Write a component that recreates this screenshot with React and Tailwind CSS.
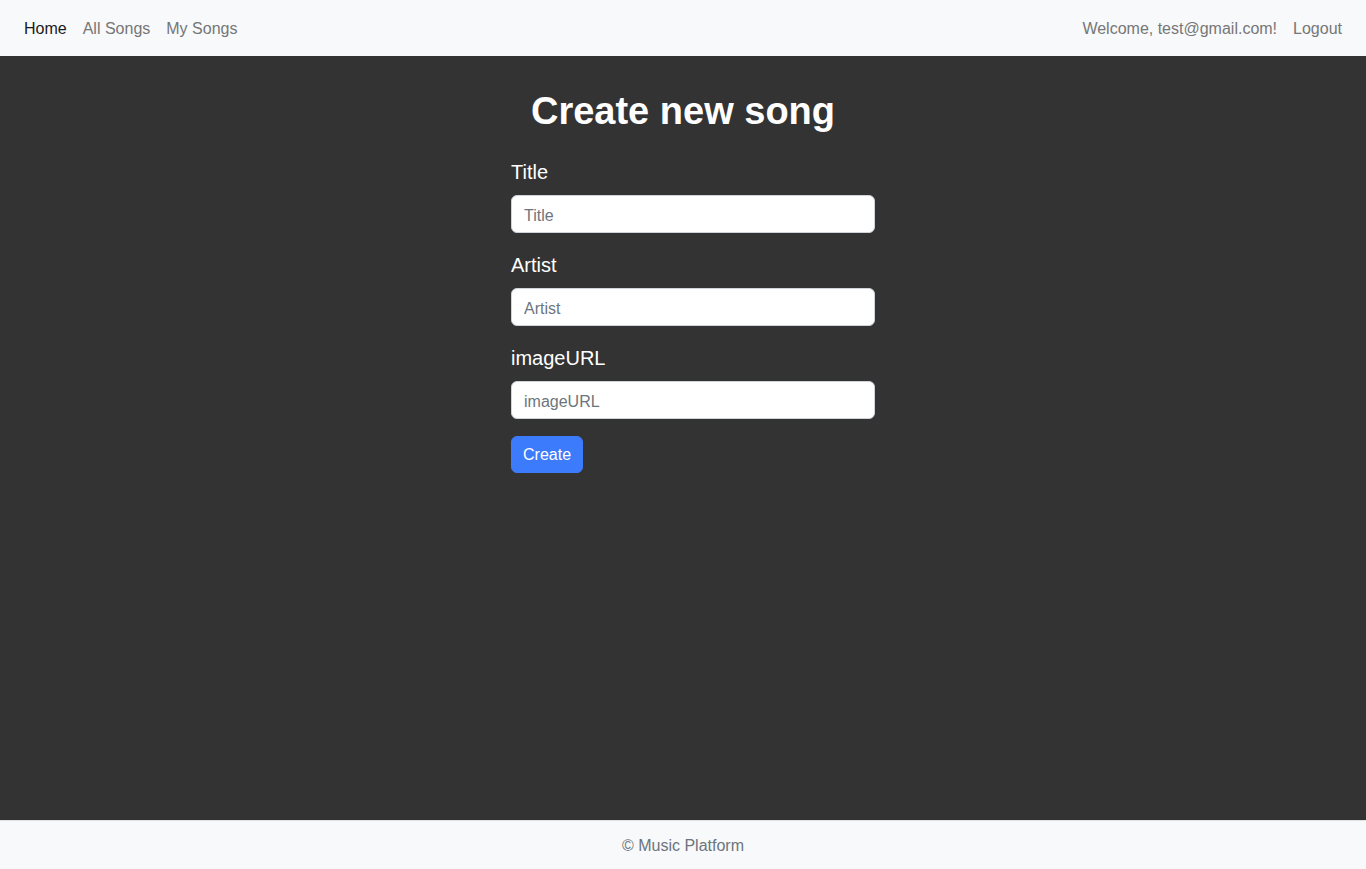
import { useState } from "react";

const navLink = "px-2 pt-[9px] pb-[7px] text-[16px] leading-6";

const Field = ({ label, value, onChange }) => (
  <div className="mb-[17px]">
    <label className="block mb-2 text-[20px] leading-[30px] text-white">{label}</label>
    <input
      type="text"
      placeholder={label}
      value={value}
      onChange={onChange}
      className="block w-full h-[38px] px-3 pt-2 pb-1 bg-white text-[16px] text-[#212529] border border-[#ced4da] rounded-md placeholder:text-[#6c757d] outline-none"
    />
  </div>
);

const App = () => {
  const [form, setForm] = useState({ title: "", artist: "", imageURL: "" });

  function changeHandler(key) {
    return (e) => setForm({ ...form, [key]: e.target.value });
  }

  return (
    <div className="min-h-screen flex flex-col bg-[#333333] font-['Liberation_Sans',Arial,sans-serif]">
      <nav className="h-14 shrink-0 bg-[#f8f9fa] flex items-center justify-between px-4">
        <div className="flex">
          <a className={`${navLink} text-[#1a1a1a]`}>Home</a>
          <a className={`${navLink} text-[#757677]`}>All Songs</a>
          <a className={`${navLink} text-[#757677]`}>My Songs</a>
        </div>
        <div className="flex">
          <span className={`${navLink} text-[#757677]`}>Welcome, test@gmail.com!</span>
          <a className={`${navLink} text-[#757677]`}>Logout</a>
        </div>
      </nav>

      <main className="flex-1 flex flex-col items-center pt-[31px]">
        <h1 className="text-center text-[38px] leading-[48px] font-bold text-white mb-[22px]">
          Create new song
        </h1>
        <form className="w-[364px] ml-5" onSubmit={(e) => e.preventDefault()}>
          <Field label="Title" value={form.title} onChange={changeHandler("title")} />
          <Field label="Artist" value={form.artist} onChange={changeHandler("artist")} />
          <Field label="imageURL" value={form.imageURL} onChange={changeHandler("imageURL")} />
          <button className="h-[37px] px-[11px] text-[16px] text-white bg-[#3d7bfd] border border-[#3d7bfd] rounded-md">
            Create
          </button>
        </form>
      </main>

      <footer className="h-[49px] shrink-0 bg-[#f8f9fa] border-t border-[#dee2e6] flex items-center justify-center pt-0.5 text-[16px] text-[#6c757d]">
        © Music Platform
      </footer>
    </div>
  );
};

export default App;
